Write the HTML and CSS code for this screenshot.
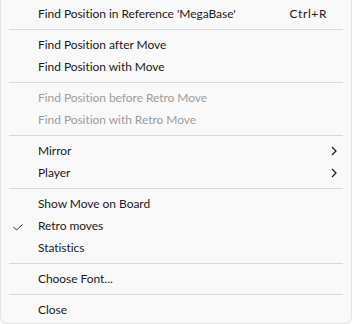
FILE: index.html
```html
<!DOCTYPE html>
<html>
<head>
<meta charset="utf-8">
<link rel="stylesheet" href="styles.css">
</head>
<body>
<div class="menu">
  <div class="item"><span class="label">Find Position in Reference 'MegaBase'</span><span class="shortcut">Ctrl+R</span></div>
  <div class="sep"></div>
  <div class="item"><span class="label">Find Position after Move</span></div>
  <div class="item"><span class="label">Find Position with Move</span></div>
  <div class="sep"></div>
  <div class="item disabled"><span class="label">Find Position before Retro Move</span></div>
  <div class="item disabled"><span class="label">Find Position with Retro Move</span></div>
  <div class="sep"></div>
  <div class="item"><span class="label">Mirror</span><svg class="arrow" width="6" height="10" viewBox="0 0 6 10"><path d="M1 1 L5 5 L1 9" fill="none" stroke="#1a1a1a" stroke-width="1.2"/></svg></div>
  <div class="item"><span class="label">Player</span><svg class="arrow" width="6" height="10" viewBox="0 0 6 10"><path d="M1 1 L5 5 L1 9" fill="none" stroke="#1a1a1a" stroke-width="1.2"/></svg></div>
  <div class="sep"></div>
  <div class="item"><span class="label">Show Move on Board</span></div>
  <div class="item"><svg class="check" width="10" height="7" viewBox="0 0 10 7"><path d="M0.5 3 L3.5 6 L9.5 0.5" fill="none" stroke="#333" stroke-width="1"/></svg><span class="label">Retro moves</span></div>
  <div class="item"><span class="label">Statistics</span></div>
  <div class="sep"></div>
  <div class="item"><span class="label">Choose Font...</span></div>
  <div class="sep"></div>
  <div class="item"><span class="label">Close</span></div>
</div>
</body>
</html>
```

FILE: styles.css
```css
html, body {
  margin: 0;
  padding: 0;
  background: #f9f9f9;
}
.menu {
  box-sizing: border-box;
  width: 352px;
  height: 324px;
  background: #f9f9f9;
  border: 1px solid #e3e3e3;
  border-top: none;
  border-radius: 0 0 7px 7px;
  padding: 3px 0 2px 0;
  font-family: Lato, "Noto Sans", sans-serif;
  font-size: 12px;
  letter-spacing: -0.05px;
  color: #1a1a1a;
}
.item {
  position: relative;
  display: flex;
  align-items: center;
  height: 22px;
  padding: 0 25px 0 37px;
  line-height: 22px;
  white-space: nowrap;
}
.label {
  flex: 1;
}
.shortcut {
  flex: none;
  letter-spacing: 0.6px;
  margin-right: -1px;
}
.disabled {
  color: #9d9d9d;
}
.arrow {
  position: absolute;
  left: 330px;
  top: 6px;
}
.check {
  position: absolute;
  left: 12px;
  top: 9px;
}
.sep {
  height: 9px;
  margin: 0 8px;
  box-sizing: border-box;
  padding-top: 4px;
}
.sep::before {
  content: "";
  display: block;
  height: 1px;
  background: #d9d9d9;
}
```
